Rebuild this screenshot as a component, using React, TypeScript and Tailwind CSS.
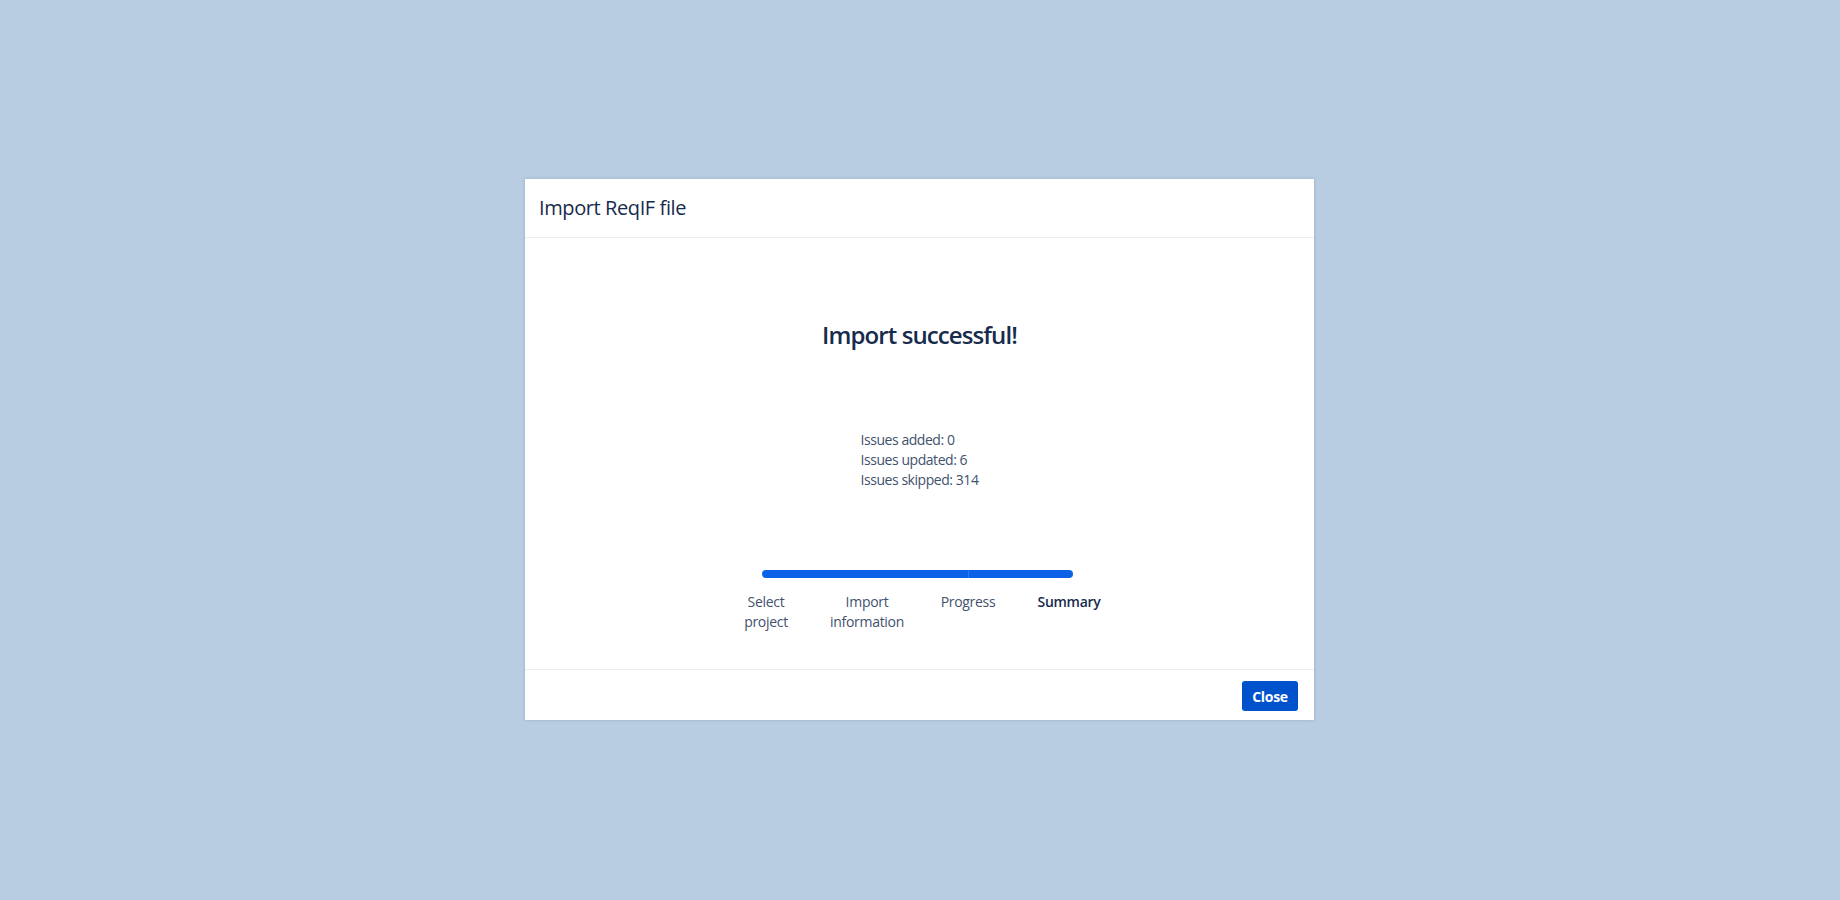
import React from "react";

const font = { fontFamily: '"Open Sans", "Noto Sans", sans-serif' };

function Step({ lines, active }: { lines: string[]; active?: boolean }) {
  return (
    <div
      className={
        "w-[101px] text-center text-[14px] leading-[20px] tracking-[-0.3px] " +
        (active ? "font-semibold text-[#172B4D]" : "text-[#42526E]")
      }
    >
      {lines.map((l) => (
        <div key={l}>{l}</div>
      ))}
    </div>
  );
}

export default function App() {
  return (
    <div
      className="w-full h-[900px] bg-[#B8CCE2] flex items-start justify-center pt-[179px] pr-px"
      style={font}
    >
      <div className="w-[789px] h-[541px] bg-white flex flex-col shadow-[0_0_3px_rgba(9,30,66,0.18)]">
        <div className="h-[59px] shrink-0 border-b border-[#EBECF0] flex items-center px-[14px]">
          <h1 className="text-[20px] leading-[28px] font-medium tracking-[-0.4px] text-[#172B4D]">
            Import ReqIF file
          </h1>
        </div>
        <div className="flex-1 flex flex-col items-center pt-[81px]">
          <h2 className="text-[24px] leading-[32px] font-semibold tracking-[-0.9px] text-[#172B4D]">
            Import successful!
          </h2>
          <div className="mt-[79px] text-[14px] leading-[20px] tracking-[-0.45px] text-[#42526E]">
            <div>Issues added: 0</div>
            <div>Issues updated: 6</div>
            <div>Issues skipped: 314</div>
          </div>
          <div className="mt-[80px] w-[404px] mr-[4px] flex flex-col">
            <div className="ml-[46px] w-[311px] h-2 rounded-full bg-[#0B62E6] flex">
              <div className="w-[206px] h-full" />
              <div className="w-px h-full bg-[#2E78EC]" />
            </div>
            <div className="mt-[14px] flex">
              <Step lines={["Select", "project"]} />
              <Step lines={["Import", "information"]} />
              <Step lines={["Progress"]} />
              <Step lines={["Summary"]} active />
            </div>
          </div>
        </div>
        <div className="h-[51px] shrink-0 border-t border-[#EBECF0] flex justify-end items-start pt-[11px] pr-4">
          <button className="w-[56px] h-[30px] rounded-[3px] bg-[#0052CC] text-white text-[14px] font-bold tracking-[-0.3px]">
            Close
          </button>
        </div>
      </div>
    </div>
  );
}
